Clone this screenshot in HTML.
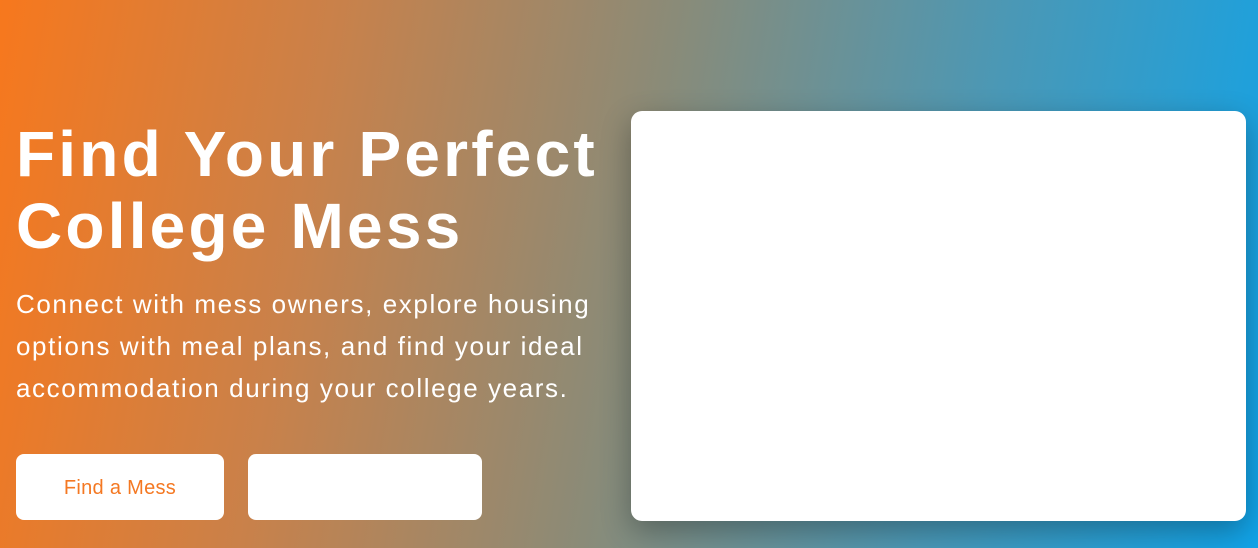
<!DOCTYPE html>
<html><head><meta charset="utf-8"><style>
html,body{margin:0;padding:0;width:1258px;height:548px;overflow:hidden}
body{background:linear-gradient(100deg,#f7781d 0%,#c9814a 25%,#8a8b78 50%,#4a98b6 75%,#10a3e8 100%);font-family:"Liberation Sans",sans-serif;position:relative}
h1{position:absolute;left:16px;top:118px;margin:0;color:#fff;font-size:64px;line-height:72px;font-weight:bold;letter-spacing:3.2px;white-space:nowrap}
p{position:absolute;left:16px;top:283px;margin:0;color:#fff;font-size:26px;line-height:42px;letter-spacing:1.6px;white-space:nowrap}
.b{position:absolute;top:454px;height:66px;background:#fff;border-radius:8px;color:#f47822;font-size:20px;letter-spacing:0.3px;display:flex;align-items:center;justify-content:center;padding-top:3px;box-sizing:border-box}
.card{position:absolute;left:631px;top:111px;width:615px;height:410px;background:#fff;border-radius:11px;box-shadow:0 10px 30px rgba(0,0,0,.3)}
</style></head><body>
<h1>Find Your Perfect<br>College Mess</h1>
<p>Connect with mess owners, explore housing<br>options with meal plans, and find your ideal<br>accommodation during your college years.</p>
<div class="b" style="left:16px;width:208px">Find a Mess</div>
<div class="b" style="left:248px;width:234px"></div>
<div class="card"></div>
</body></html>
